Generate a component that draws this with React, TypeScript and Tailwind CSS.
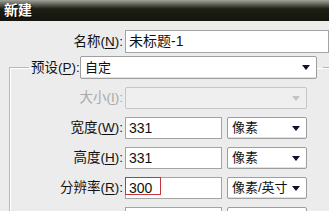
import React from 'react';

const font = { fontFamily: '"Liberation Sans", "Noto Sans CJK SC", sans-serif' };

function Arrow({ disabled }: { disabled?: boolean }) {
  return (
    <svg width="8" height="5" viewBox="0 0 8 5" className="ml-auto shrink-0">
      <path d="M0 0h8L4 5z" fill={disabled ? '#c4c4c4' : '#101030'} />
    </svg>
  );
}

function Label({ text, hot, width, disabled }: { text: string; hot: string; width: string; disabled?: boolean }) {
  return (
    <div className={`${width} shrink-0 pr-[2px] text-right text-[13.5px] leading-none ${disabled ? 'text-[#a9a9a9]' : 'text-[#111]'}`}>
      {text}(<span className="underline underline-offset-2">{hot}</span>):
    </div>
  );
}

function Field({ value, className = '' }: { value?: string; className?: string }) {
  return (
    <div className={`flex h-full items-center border border-[#a4a4a4] bg-white pl-[3px] text-[14px] text-[#111] ${className}`}>
      {value}
    </div>
  );
}

function Select({ value, className = '', disabled }: { value?: string; className?: string; disabled?: boolean }) {
  return (
    <div
      className={`flex h-full items-center rounded-[2px] border pl-[4px] pr-[6px] text-[13px] text-[#111] ${
        disabled ? 'border-[#c6c6c6] bg-[#efefef]' : 'border-[#9e9e9e] bg-white shadow-[inset_0_-1px_0_#e2e2e2]'
      } ${className}`}
    >
      <span className="whitespace-nowrap">{value}</span>
      <Arrow disabled={disabled} />
    </div>
  );
}

export default function App() {
  return (
    <div className="h-[211px] w-[329px] overflow-hidden bg-[#ececec]" style={font}>
      <div className="flex h-[21px] items-center bg-[linear-gradient(#a2a29a_0px,#55574c_5px,#1c1e14_9px,#14160e_100%)] pl-[4px] text-[14px] font-bold text-white [text-shadow:1px_1px_0_#000]">
        新建
      </div>

      <div className="mt-[9px] flex h-[23px] items-center">
        <Label text="名称" hot="N" width="w-[125px]" />
        <Field value="未标题-1" className="w-[220px]" />
      </div>

      <fieldset className="ml-[9px] mt-[3px] w-[340px] border border-[#b8b8b8] px-0 pb-4 pt-0 shadow-[inset_1px_1px_0_#fff,1px_1px_0_#fff]">
        <legend className="ml-[19px] px-[2px]">
          <div className="flex h-[23px] items-center">
            <div className="w-[49px] text-[13.5px] leading-none text-[#111]">
              预设(<span className="underline underline-offset-2">P</span>):
            </div>
            <Select value="自定" className="w-[237px]" />
            <div className="w-[4px]" />
          </div>
        </legend>

        <div className="mt-[8px] flex flex-col gap-[8px]">
          <div className="flex h-[22px] items-center">
            <Label text="大小" hot="I" width="w-[115px]" disabled />
            <Select disabled className="w-[182px]" />
          </div>
          <div className="flex h-[22px] items-center">
            <Label text="宽度" hot="W" width="w-[115px]" />
            <Field value="331" className="w-[97px]" />
            <Select value="像素" className="ml-[5px] w-[80px]" />
          </div>
          <div className="flex h-[22px] items-center">
            <Label text="高度" hot="H" width="w-[115px]" />
            <Field value="331" className="w-[97px]" />
            <Select value="像素" className="ml-[5px] w-[80px]" />
          </div>
          <div className="flex h-[22px] items-center">
            <Label text="分辨率" hot="R" width="w-[115px]" />
            <div className="relative h-full w-[97px]">
              <Field value="300" className="w-full" />
              <div className="absolute left-0 top-0 h-[18px] w-[36px] border border-[#c8343a]" />
            </div>
            <Select value="像素/英寸" className="ml-[5px] w-[80px]" />
          </div>
          <div className="flex h-[22px] items-center">
            <div className="w-[115px] shrink-0" />
            <Field className="w-[97px]" />
            <Select className="ml-[5px] w-[80px]" />
          </div>
        </div>
      </fieldset>
    </div>
  );
}
